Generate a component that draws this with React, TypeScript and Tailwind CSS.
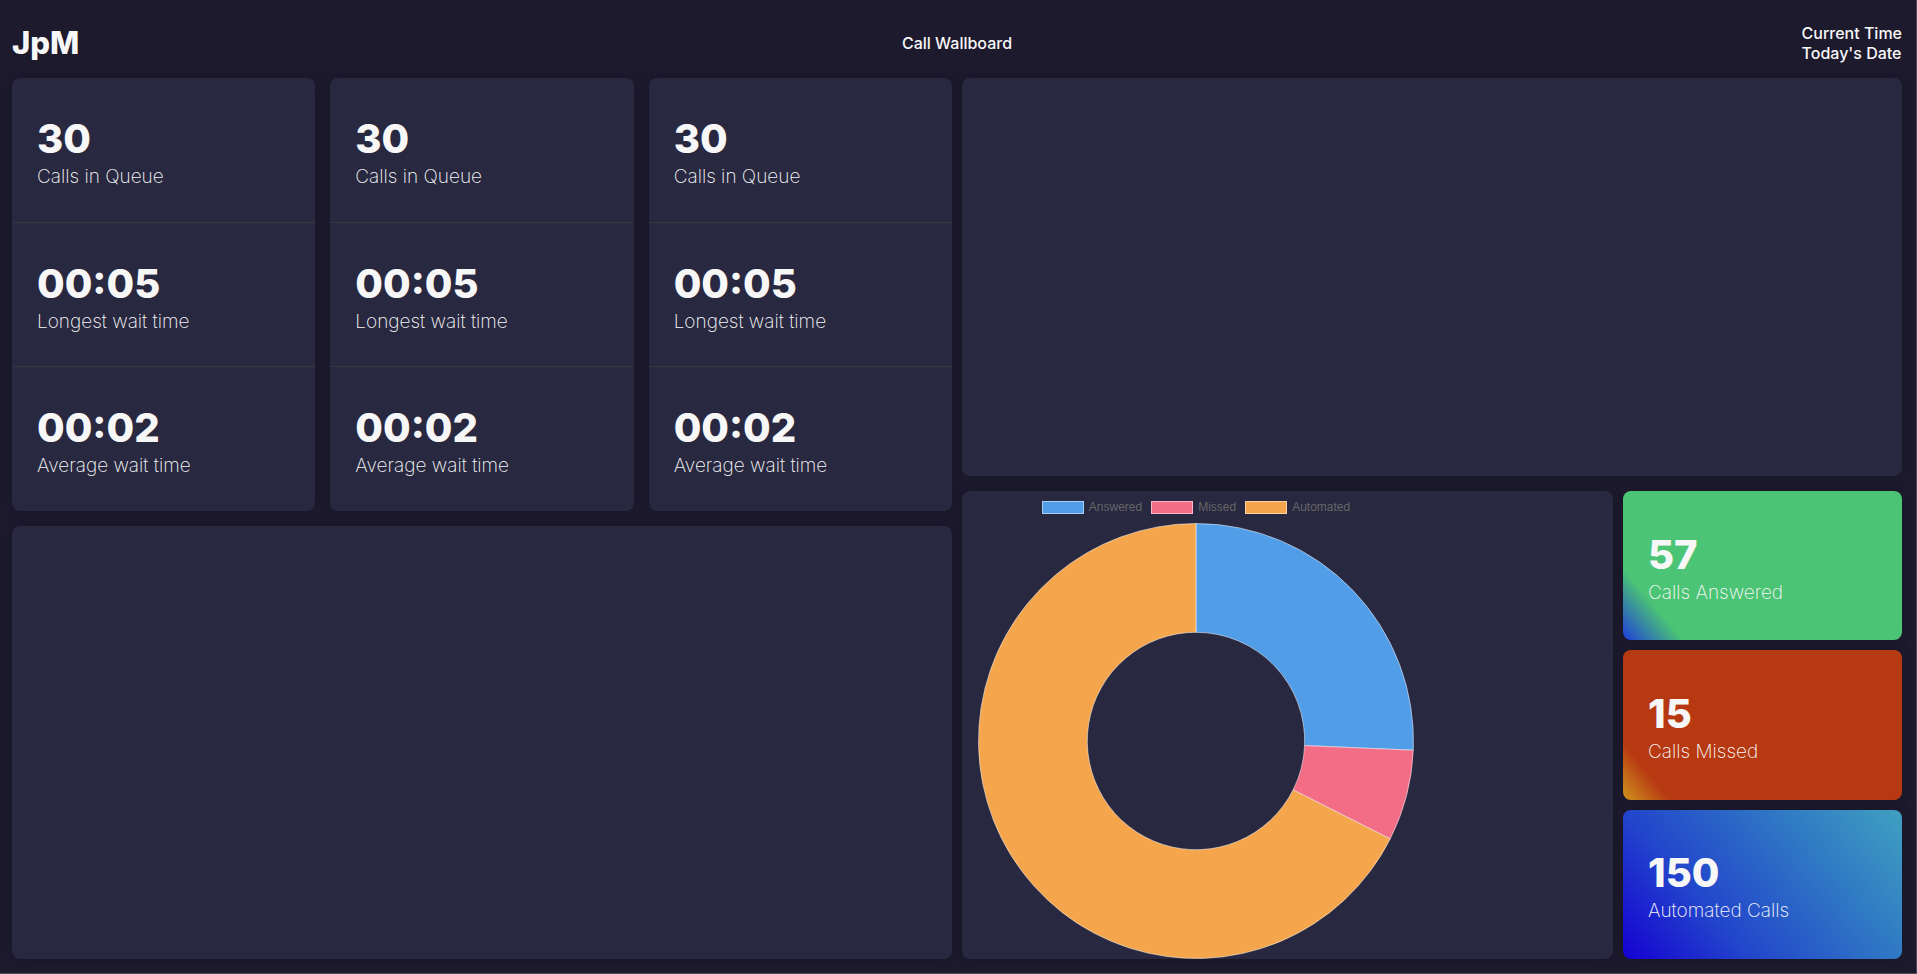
const queues = [1, 2, 3];

const queueStats = [
  { value: "30", label: "Calls in Queue" },
  { value: "00:05", label: "Longest wait time" },
  { value: "00:02", label: "Average wait time" },
];

const totals = [
  { value: "57", label: "Calls Answered", background: "bg-[linear-gradient(50deg,#1f3ddb_0%,#4bc475_15%)]" },
  { value: "15", label: "Calls Missed", background: "bg-[linear-gradient(50deg,#cf941f_0%,#b73912_12%)]" },
  {
    value: "150",
    label: "Automated Calls",
    background: "bg-[linear-gradient(50deg,#1500d2_0%,#2245cb_31%,#3079c4_69%,#3fa0c0_100%)]",
  },
];

const slices = [
  { label: "Answered", count: 57, fill: "fill-[#529de8]", swatch: "bg-[#529de8]" },
  { label: "Missed", count: 15, fill: "fill-[#f46d87]", swatch: "bg-[#f46d87]" },
  { label: "Automated", count: 150, fill: "fill-[#f5a54b]", swatch: "bg-[#f5a54b]" },
];

const panel = "rounded-lg bg-[#282840] shadow-[0_0_12px_rgba(0,0,0,0.2)]";

function Stat({ value, label }: { value: string; label: string }) {
  return (
    <div className="flex flex-1 flex-col justify-center px-[25px] pt-2">
      <div className="text-[40px] leading-[46px] font-extrabold">{value}</div>
      <div className="text-[19px] leading-[30px] font-extralight">{label}</div>
    </div>
  );
}

function ring(start: number, end: number, outer: number, inner: number) {
  const point = (fraction: number, radius: number) => {
    const angle = fraction * 2 * Math.PI;
    return `${218 + radius * Math.sin(angle)} ${218 - radius * Math.cos(angle)}`;
  };
  const large = end - start > 0.5 ? 1 : 0;
  return `M${point(start, outer)}A${outer} ${outer} 0 ${large} 1 ${point(end, outer)}L${point(end, inner)}A${inner} ${inner} 0 ${large} 0 ${point(start, inner)}Z`;
}

function Doughnut() {
  const total = slices.reduce((sum, slice) => sum + slice.count, 0);
  let offset = 0;
  return (
    <svg viewBox="0 0 436 436" className="block w-full" role="img" aria-label="Calls by outcome">
      {slices.map((slice) => {
        const start = offset / total;
        offset += slice.count;
        return (
          <path
            key={slice.label}
            d={ring(start, offset / total, 217.5, 108.7)}
            className={slice.fill}
            stroke="#ffffff"
            strokeOpacity="0.5"
            strokeWidth="1"
            strokeLinejoin="bevel"
          />
        );
      })}
    </svg>
  );
}

export default function App() {
  return (
    <div className="flex min-h-screen flex-col border-r border-b border-[#4b4a5b] bg-[#1d1a2e] pt-2 pr-[14px] pb-[14px] pl-3 font-['Inter',sans-serif] text-[#f7f7f7]">
      <header className="grid h-[70px] grid-cols-3 items-center font-medium">
        <h1 className="text-[31px] leading-10 font-extrabold">JpM</h1>
        <p className="text-center text-base">Call Wallboard</p>
        <div className="justify-self-end text-base leading-5">
          <p>Current Time</p>
          <p>Today's Date</p>
        </div>
      </header>

      <main className="grid flex-1 grid-cols-2 gap-[10px]">
        <div className="grid grid-rows-2 gap-[15px]">
          <div className="grid grid-cols-3 gap-[15px]">
            {queues.map((queue) => (
              <section key={queue} className={`flex flex-col divide-y divide-[#38373f] ${panel}`}>
                {queueStats.map((stat) => (
                  <Stat key={stat.label} {...stat} />
                ))}
              </section>
            ))}
          </div>
          <section className={panel} />
        </div>

        <div className="grid grid-rows-[398fr_468fr] gap-[15px]">
          <section className={panel} />
          <div className="grid grid-cols-[7fr_3fr] gap-[10px]">
            <section className={`px-4 ${panel}`}>
              <div className="w-[436px]">
                <ul className="flex h-8 items-center justify-center gap-[9px] font-['Liberation_Sans',sans-serif] text-xs text-[#666666]">
                  {slices.map((slice) => (
                    <li key={slice.label} className="flex items-center gap-[5px]">
                      <span className={`h-[13px] w-[42px] border border-white/50 ${slice.swatch}`} />
                      {slice.label}
                    </li>
                  ))}
                </ul>
                <Doughnut />
              </div>
            </section>
            <div className="grid grid-rows-3 gap-[10px]">
              {totals.map((total) => (
                <section
                  key={total.label}
                  className={`flex rounded-lg shadow-[0_0_12px_rgba(0,0,0,0.2)] ${total.background}`}
                >
                  <Stat value={total.value} label={total.label} />
                </section>
              ))}
            </div>
          </div>
        </div>
      </main>
    </div>
  );
}
